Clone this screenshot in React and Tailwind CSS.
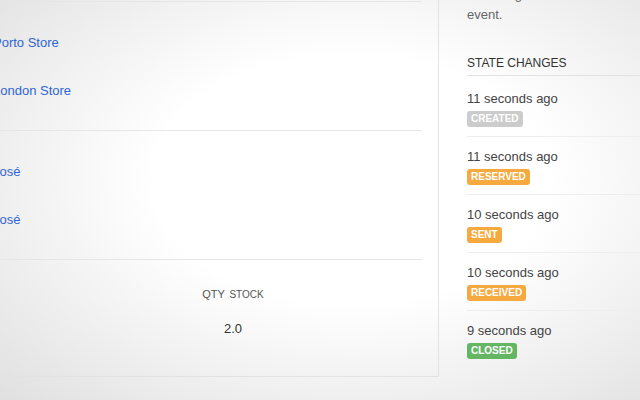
const stores = ["Porto Store", "London Store"];
const people = ["José", "José"];

const changes = [
  { when: "11 seconds ago", state: "Created", color: "bg-[#cccccc]" },
  { when: "11 seconds ago", state: "Reserved", color: "bg-[#f6a93f]" },
  { when: "10 seconds ago", state: "Sent", color: "bg-[#f6a93f]" },
  { when: "10 seconds ago", state: "Received", color: "bg-[#f6a93f]" },
  { when: "9 seconds ago", state: "Closed", color: "bg-[#64b663]" },
];

const LinkRow = ({ label }) => (
  <div className="h-12 flex items-center pt-px">
    <a href="#" className="-ml-[7px] text-[13px] text-[#2f66d6] whitespace-nowrap">
      {label}
    </a>
  </div>
);

export default function App() {
  return (
    <div className="w-[640px] h-[400px] overflow-hidden flex bg-[radial-gradient(ellipse_at_55%_45%,#ffffff_40%,#e0e0e0_100%)] font-['Liberation_Sans',Arial,sans-serif]">
      <div className="w-[439px] h-[377px] shrink-0 border-r border-b border-[#e2e2e2] pr-4 flex flex-col">
        <div className="mt-px border-t border-[#e6e6e6] py-4">
          {stores.map((s, i) => (
            <LinkRow key={i} label={s} />
          ))}
        </div>
        <div className="border-t border-[#e6e6e6] py-4">
          {people.map((p, i) => (
            <LinkRow key={i} label={p} />
          ))}
        </div>
        <div className="border-t border-[#e6e6e6] flex-1">
          <div className="ml-[173px] w-[120px] pt-[25px] flex flex-col items-center">
            <div className="leading-4 text-[#555] whitespace-nowrap">
              <span className="text-[11px]">QTY</span>{" "}
              <span className="text-[10px]">STOCK</span>
            </div>
            <div className="mt-[17px] leading-[18px] text-[13px] text-[#333]">2.0</div>
          </div>
        </div>
      </div>

      <div className="flex-1 pl-[28px] flex flex-col">
        <p className="-mt-[15px] text-[13px] leading-5 text-[#666] whitespace-nowrap">
          Following the state of this
          <br />
          event.
        </p>
        <h3 className="mt-[30px] text-[12px] leading-4 pb-1 text-[#333] border-b border-[#e2e2e2] whitespace-nowrap">
          STATE CHANGES
        </h3>
        {changes.map((c, i) => (
          <div
            key={i}
            className={`${i === 0 ? "pt-[14px]" : "pt-[11px]"} pb-[9px] ${i < changes.length - 1 ? "border-b border-[#eeeeee]" : ""}`}
          >
            <div className="text-[13px] leading-[18px] text-[#444] whitespace-nowrap">{c.when}</div>
            <div
              className={`mt-[3px] flex w-fit items-center h-4 px-[4px] rounded-[3px] text-[10px] font-bold leading-none text-white uppercase ${c.color}`}
            >
              {c.state}
            </div>
          </div>
        ))}
      </div>
    </div>
  );
}
